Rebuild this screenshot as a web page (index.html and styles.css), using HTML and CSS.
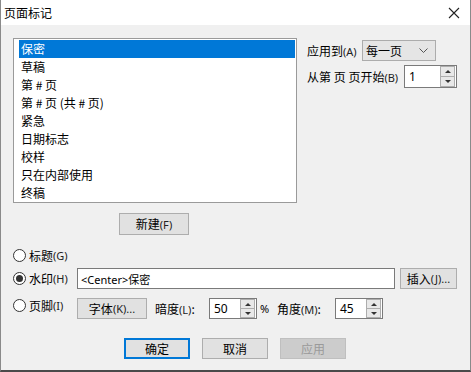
FILE: index.html
```html
<!DOCTYPE html>
<html lang="zh">
<head>
<meta charset="utf-8">
<title>页面标记</title>
<link rel="stylesheet" href="styles.css">
</head>
<body>
<div class="window">
  <div class="titlebar">
    <span class="title">页面标记</span>
    <svg class="close" width="12" height="12" viewBox="0 0 12 12"><path d="M1 1 L11 11 M11 1 L1 11" stroke="#222" stroke-width="1.1" fill="none"/></svg>
  </div>
  <div class="body">
    <div class="top">
      <div class="left">
        <ul class="list">
          <li class="sel">保密</li>
          <li>草稿</li>
          <li>第 # 页</li>
          <li>第 # 页 (共 # 页)</li>
          <li>紧急</li>
          <li>日期标志</li>
          <li>校样</li>
          <li>只在内部使用</li>
          <li>终稿</li>
        </ul>
        <button class="btn new">新建<span class="lat">(F)</span></button>
      </div>
      <div class="right">
        <div class="rrow r1">
          <span class="lbl">应用到<span class="lat">(A)</span></span>
          <div class="select"><span>每一页</span><svg width="9" height="6" viewBox="0 0 9 6"><path d="M0.5 0.5 L4.5 4.5 L8.5 0.5" stroke="#555" fill="none"/></svg></div>
        </div>
        <div class="rrow r2">
          <span class="lbl">从第 页 页开始<span class="lat">(B)</span></span>
          <div class="spin w53"><span class="val">1</span><span class="arrows"><i class="up"></i><i class="down"></i></span></div>
        </div>
      </div>
    </div>
    <div class="options">
      <div class="orow o1">
        <label class="radio"><span class="circle"></span>标题<span class="lat">(G)</span></label>
      </div>
      <div class="orow o2">
        <label class="radio"><span class="circle on"></span>水印<span class="lat">(H)</span></label>
        <div class="text">&lt;Center&gt;保密</div>
        <button class="btn insert">插入<span class="lat">(J)...</span></button>
      </div>
      <div class="orow o3">
        <label class="radio up3"><span class="circle"></span>页脚<span class="lat">(I)</span></label>
        <button class="btn font">字体<span class="lat">(K)...</span></button>
        <span class="lbl dark">暗度<span class="lat">(L)</span>:</span>
        <div class="spin w48"><span class="val">50</span><span class="arrows"><i class="up"></i><i class="down"></i></span></div>
        <span class="pct">%</span>
        <span class="lbl angle">角度<span class="lat">(M)</span>:</span>
        <div class="spin w48"><span class="val">45</span><span class="arrows"><i class="up"></i><i class="down"></i></span></div>
      </div>
    </div>
    <div class="footer">
      <button class="btn ok">确定</button>
      <button class="btn">取消</button>
      <button class="btn disabled">应用</button>
    </div>
  </div>
</div>
</body>
</html>
```

FILE: styles.css
```css
* { box-sizing: border-box; }
html, body { margin: 0; padding: 0; }
body {
  font-family: "Noto Sans", "Noto Sans CJK SC", sans-serif;
  font-size: 12px;
  color: #000;
  background: #f0f0f0;
}
.window {
  width: 471px;
  height: 372px;
  background: #f0f0f0;
  border-left: 1px solid #8a8a8a;
  border-right: 1px solid #8a8a8a;
  border-bottom: 2px solid #4a4a4a;
  overflow: hidden;
}
.titlebar {
  height: 25px;
  background: #fff;
  display: flex;
  align-items: center;
  justify-content: space-between;
  padding: 0 10px 0 3px;
}
.title {
  font-family: "Noto Sans CJK SC", sans-serif;
  font-size: 12px;
  line-height: 1;
}
.body { padding: 13px 0 0 12px; }
.lat { font-family: "Noto Sans", sans-serif; font-size: 11px; color: #222; }
.top { display: flex; }
.left { width: 284px; display: flex; flex-direction: column; align-items: center; }
.list {
  list-style: none;
  margin: 0;
  padding: 1px 1px 1px 5px;
  width: 284px;
  height: 165px;
  background: #fff;
  border: 1px solid #9a9a9a;
  font-family: "Noto Sans CJK SC", sans-serif;
}
.list li {
  height: 18px;
  line-height: 18px;
  padding-left: 2px;
  margin-right: 0;
  white-space: pre;
}
.list li.sel { background: #0078d7; color: #fff; }
.btn {
  font-family: "Noto Sans CJK SC", sans-serif;
  font-size: 12px;
  height: 21px;
  padding: 0;
  background: #e1e1e1;
  border: 1px solid #adadad;
  color: #000;
  display: inline-flex;
  align-items: center;
  justify-content: center;
  line-height: 1;
}
.new { width: 70px; height: 22px; margin-top: 10px; margin-right: 2px; }
.right { margin-left: 10px; padding-top: 2px; }
.rrow { display: flex; align-items: center; }
.lbl { font-family: "Noto Sans CJK SC", sans-serif; white-space: pre; }
.r1 { height: 21px; }
.r1 .lbl { width: 55px; }
.select {
  width: 74px;
  height: 21px;
  background: #e5e5e5;
  border: 1px solid #acacac;
  display: flex;
  align-items: center;
  justify-content: space-between;
  padding: 0 7px 0 3px;
  font-family: "Noto Sans CJK SC", sans-serif;
}
.r2 { height: 23px; margin-top: 4px; }
.r2 .lbl { width: 97px; }
.spin {
  height: 21px;
  background: #fff;
  border: 1px solid #7a7a7a;
  display: flex;
  align-items: center;
  justify-content: space-between;
  padding: 0 1px 0 4px;
  font-family: "Noto Sans", sans-serif;
}
.r2 .spin { height: 23px; }
.w53 { width: 53px; }
.w48 { width: 48px; }
.arrows {
  width: 15px;
  height: 19px;
  display: flex;
  flex-direction: column;
  border: 1px solid #adadad;
  background: #e8e8e8;
}
.r2 .arrows { height: 21px; }
.arrows i {
  flex: 1;
  display: flex;
  align-items: center;
  justify-content: center;
}
.arrows i.up { border-bottom: 1px solid #adadad; }
.arrows i.up::before {
  content: "";
  border-left: 3px solid transparent;
  border-right: 3px solid transparent;
  border-bottom: 3px solid #333;
}
.arrows i.down::before {
  content: "";
  border-left: 3px solid transparent;
  border-right: 3px solid transparent;
  border-top: 3px solid #333;
}
.options { margin-top: 10px; }
.orow { display: flex; align-items: center; }
.o1 { height: 20px; }
.o2 { height: 21px; margin-top: 3px; }
.o3 { height: 21px; margin-top: 9px; }
.radio {
  width: 64px;
  display: flex;
  align-items: center;
  font-family: "Noto Sans CJK SC", sans-serif;
  white-space: pre;
}
.radio.up3 { align-self: flex-start; margin-top: -3px; height: 20px; }
.circle {
  width: 13px;
  height: 13px;
  border: 1px solid #333;
  border-radius: 50%;
  background: #fff;
  margin-right: 3px;
  display: flex;
  align-items: center;
  justify-content: center;
}
.circle.on::after {
  content: "";
  width: 7px;
  height: 7px;
  border-radius: 50%;
  background: #333;
}
.text {
  width: 318px;
  height: 21px;
  background: #fff;
  border: 1px solid #7a7a7a;
  padding-left: 3px;
  display: flex;
  align-items: center;
  font-family: "Noto Sans", "Noto Sans CJK SC", sans-serif;
  font-size: 11px;
}
.insert { width: 57px; margin-left: 5px; }
.font { width: 70px; }
.dark { margin-left: 8px; width: 54px; }
.pct { margin-left: 3px; width: 17px; font-family: "Noto Sans", sans-serif; font-size: 11px; }
.angle { width: 58px; }
.footer { display: flex; gap: 12px; margin-top: 19px; margin-left: 111px; }
.footer .btn { width: 66px; }
.ok { border: 2px solid #0078d7; }
.disabled { background: #cccccc; border-color: #bfbfbf; color: #9a9a9a; }
```
